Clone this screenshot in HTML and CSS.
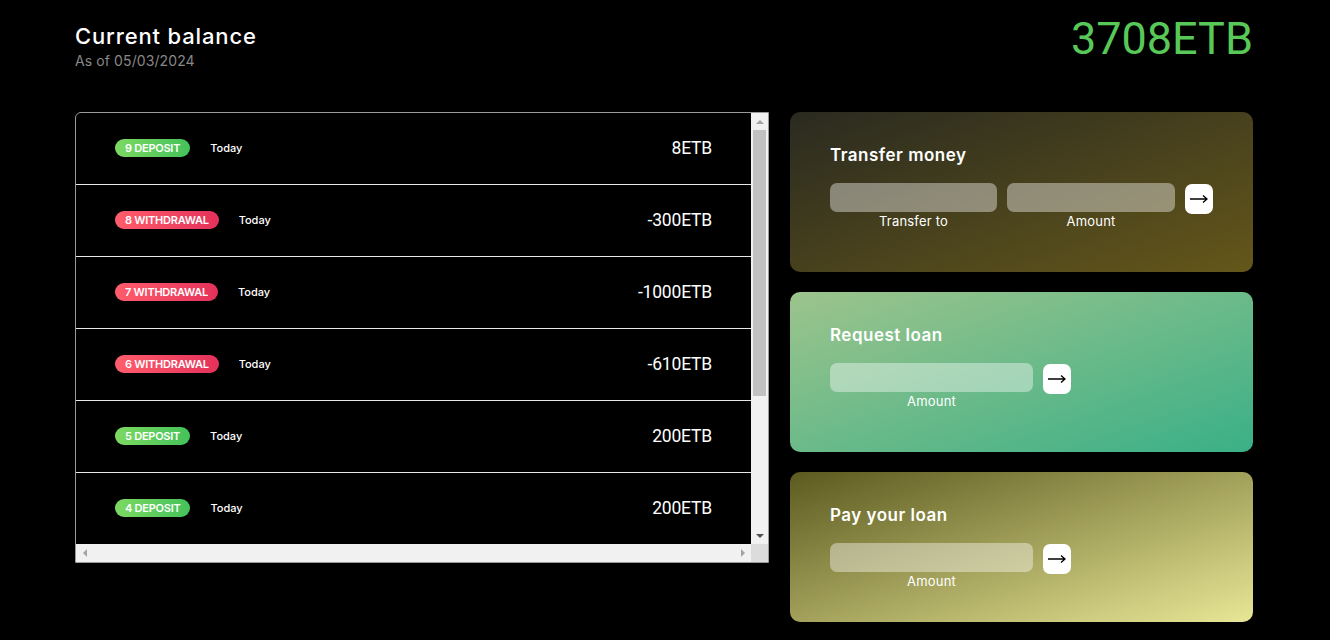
FILE: index.html
```html
<!DOCTYPE html>
<html lang="en">
<head>
<meta charset="utf-8">
<title>Bankist</title>
<link rel="stylesheet" href="styles.css">
</head>
<body>
<main class="app">
  <header class="balance">
    <div class="balance-info">
      <p class="balance-label">Current balance</p>
      <p class="balance-date">As of <span>05/03/2024</span></p>
    </div>
    <p class="balance-value">3708ETB</p>
  </header>

  <div class="main-grid">
    <section class="movements">
      <div class="movements-list">
        <div class="row"><span class="type deposit">9 deposit</span><span class="date">Today</span><span class="value">8ETB</span></div>
        <div class="row"><span class="type withdrawal">8 withdrawal</span><span class="date">Today</span><span class="value">-300ETB</span></div>
        <div class="row"><span class="type withdrawal">7 withdrawal</span><span class="date">Today</span><span class="value">-1000ETB</span></div>
        <div class="row"><span class="type withdrawal">6 withdrawal</span><span class="date">Today</span><span class="value">-610ETB</span></div>
        <div class="row"><span class="type deposit">5 deposit</span><span class="date">Today</span><span class="value">200ETB</span></div>
        <div class="row"><span class="type deposit">4 deposit</span><span class="date">Today</span><span class="value">200ETB</span></div>
      </div>
      <div class="vscroll">
        <div class="sbtn"><span class="arr arr-up"></span></div>
        <div class="thumb"></div>
        <div class="track"></div>
        <div class="sbtn"><span class="arr arr-down"></span></div>
      </div>
      <div class="hscroll">
        <div class="hbtn"><span class="arr arr-left"></span></div>
        <div class="hbtn"><span class="arr arr-right"></span></div>
      </div>
      <div class="corner"></div>
    </section>

    <section class="operations">
      <div class="card card-transfer">
        <h2>Transfer money</h2>
        <form class="form form-transfer">
          <input type="text" class="field">
          <input type="number" class="field">
          <button type="button" class="go"><svg width="20" height="12" viewBox="0 0 20 12"><path d="M1 6h17M14 2.5l4 3.5-4 3.5" fill="none" stroke="#000" stroke-width="1.3"/></svg></button>
          <label class="label">Transfer to</label>
          <label class="label">Amount</label>
        </form>
      </div>
      <div class="card card-loan">
        <h2>Request loan</h2>
        <form class="form form-single">
          <input type="number" class="field">
          <button type="button" class="go"><svg width="20" height="12" viewBox="0 0 20 12"><path d="M1 6h17M14 2.5l4 3.5-4 3.5" fill="none" stroke="#000" stroke-width="1.3"/></svg></button>
          <label class="label">Amount</label>
        </form>
      </div>
      <div class="card card-pay">
        <h2>Pay your loan</h2>
        <form class="form form-single">
          <input type="number" class="field">
          <button type="button" class="go"><svg width="20" height="12" viewBox="0 0 20 12"><path d="M1 6h17M14 2.5l4 3.5-4 3.5" fill="none" stroke="#000" stroke-width="1.3"/></svg></button>
          <label class="label">Amount</label>
        </form>
      </div>
    </section>
  </div>
</main>
</body>
</html>
```

FILE: styles.css
```css
* {
  margin: 0;
  padding: 0;
  box-sizing: border-box;
}

body {
  background: #000;
  color: #fff;
  font-family: Inter, "Noto Sans", sans-serif;
}

.app {
  width: 1178px;
  margin-left: 75px;
}

/* Header */
.balance {
  height: 112px;
  display: flex;
  justify-content: space-between;
  align-items: flex-start;
}

.balance-label {
  font-size: 22px;
  font-weight: 500;
  line-height: 26px;
  letter-spacing: 0.85px;
  margin-top: 23px;
}

.balance-date {
  font-size: 14px;
  color: #888;
  line-height: 18px;
  letter-spacing: 0.1px;
  margin-top: 3px;
}

.balance-value {
  font-family: Roboto, "Liberation Sans", sans-serif;
  font-size: 45px;
  line-height: 1;
  color: #58c958;
  margin-top: 16px;
}

/* Grid */
.main-grid {
  display: grid;
  grid-template-columns: 694px 463px;
  column-gap: 21px;
  align-items: start;
}

/* Movements */
.movements {
  height: 451px;
  border: 1px solid #9a9a9a;
  border-top-left-radius: 6px;
  display: grid;
  grid-template-columns: 1fr 17px;
  grid-template-rows: 1fr 18px;
  overflow: hidden;
  background: #000;
}

.movements-list {
  overflow: hidden;
}

.row {
  height: 72px;
  border-bottom: 1px solid #e8e8e8;
  display: flex;
  align-items: center;
  padding: 0 39px 1px 39px;
}

.type {
  font-size: 11px;
  font-weight: 600;
  letter-spacing: -0.25px;
  text-transform: uppercase;
  height: 18px;
  line-height: 18px;
  padding: 0 10px;
  border-radius: 10px;
  margin-right: 20px;
  color: #fff;
}

.deposit {
  background: linear-gradient(to right, #7cd962, #44c25a);
}

.withdrawal {
  background: linear-gradient(to right, #ff5d6c, #e4315a);
}

.date {
  font-size: 11px;
  font-weight: 500;
}

.value {
  margin-left: auto;
  font-family: Roboto, "Liberation Sans", sans-serif;
  font-size: 17.5px;
  letter-spacing: -0.2px;
}

/* Fake scrollbars */
.vscroll {
  background: #f1f1f1;
  display: flex;
  flex-direction: column;
  align-items: center;
}

.sbtn {
  height: 17px;
  width: 17px;
  display: flex;
  align-items: center;
  justify-content: center;
}

.thumb {
  width: 13px;
  height: 266px;
  background: #c1c1c1;
}

.track {
  flex: 1;
}

.hscroll {
  background: #f1f1f1;
  display: flex;
  justify-content: space-between;
  align-items: center;
}

.hbtn {
  width: 17px;
  height: 18px;
  display: flex;
  align-items: center;
  justify-content: center;
}

.corner {
  background: #dcdcdc;
}

.arr {
  width: 0;
  height: 0;
}

.arr-up {
  border-left: 4px solid transparent;
  border-right: 4px solid transparent;
  border-bottom: 4px solid #a3a3a3;
}

.arr-down {
  border-left: 4px solid transparent;
  border-right: 4px solid transparent;
  border-top: 4px solid #505050;
}

.arr-left {
  border-top: 4px solid transparent;
  border-bottom: 4px solid transparent;
  border-right: 4px solid #a3a3a3;
}

.arr-right {
  border-top: 4px solid transparent;
  border-bottom: 4px solid transparent;
  border-left: 4px solid #a3a3a3;
}

/* Operations */
.operations {
  display: flex;
  flex-direction: column;
  gap: 20px;
}

.card {
  height: 160px;
  border-radius: 10px;
  padding: 31px 40px 30px;
}

.card-pay {
  height: 150px;
}

.card h2 {
  font-size: 17px;
  font-weight: 600;
  line-height: 25px;
  letter-spacing: 0.5px;
  margin-bottom: 15px;
}

.card-transfer {
  background: linear-gradient(to bottom right, #2a2a20, #64571a);
}

.card-loan {
  background: linear-gradient(to bottom right, #9dc48c, #3ab087);
}

.card-pay {
  background: linear-gradient(to bottom right, #5c5a1f, #e8e796);
}

.form {
  display: grid;
  column-gap: 10px;
  align-items: start;
}

.form-transfer {
  grid-template-columns: 167px 168px 28px;
}

.form-single {
  grid-template-columns: 203px 28px;
}

.field {
  height: 29px;
  border: none;
  border-radius: 7px;
  background: rgba(255, 255, 255, 0.4);
  outline: none;
}

.go {
  width: 28px;
  height: 30px;
  margin-top: 1px;
  border: none;
  border-radius: 7px;
  background: #fff;
  display: flex;
  align-items: center;
  justify-content: center;
}

.label {
  font-size: 13px;
  line-height: 15px;
  letter-spacing: 0.2px;
  text-align: center;
  color: #fff;
}
```
